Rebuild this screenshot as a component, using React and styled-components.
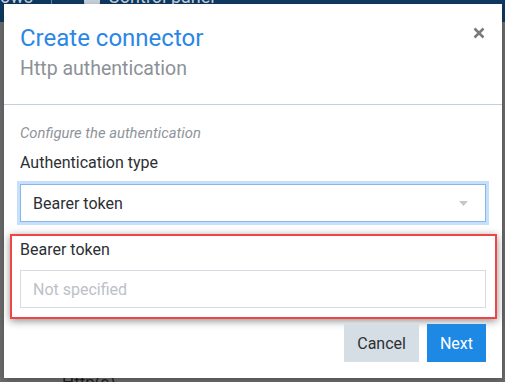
import React from 'react';
import styled, { createGlobalStyle } from 'styled-components';

const GlobalStyle = createGlobalStyle`
  *,
  *:before,
  *:after {
    margin: 0;
    padding: 0;
    box-sizing: border-box;
  }

  body {
    margin: 0;
    font-family: Roboto, 'Noto Sans', sans-serif;
    overflow: hidden;
  }
`;

const Page = styled.div`
  position: relative;
  width: 505px;
  height: 382px;
  background: #6c6c6c;
  overflow: hidden;
`;

const NavBar = styled.div`
  display: flex;
  align-items: flex-end;
  height: 22px;
  background: #0f3a63;
  color: #c9d3de;
  font-size: 18px;
  line-height: 1;
  padding: 0 0 16px 0;
`;

const NavItem = styled.span`
  display: flex;
  align-items: center;
  gap: 8px;
  margin-left: ${props => props.offset || 0}px;
`;

const NavSep = styled.span`
  width: 1px;
  height: 22px;
  background: #6d88a6;
  margin-left: 18px;
`;

const BehindText = styled.div`
  position: absolute;
  left: 62px;
  top: 372px;
  font-size: 17px;
  color: #1e1e1e;
`;

const Modal = styled.div`
  position: absolute;
  top: 4px;
  left: 4px;
  width: 498px;
  height: 374px;
  background: #fff;
  box-shadow: 0 2px 8px rgba(0, 0, 0, 0.25);
  display: flex;
  flex-direction: column;
`;

const Header = styled.div`
  position: relative;
  height: 101px;
  padding: 20px 16px 0;
  border-bottom: 1px solid #c3cfdb;
`;

const Title = styled.h1`
  font-size: 24px;
  font-weight: 400;
  line-height: 28px;
  color: #2b87e4;
`;

const Subtitle = styled.h2`
  font-size: 19.5px;
  font-weight: 400;
  line-height: 23px;
  margin-top: 5px;
  color: #8c9198;
`;

const CloseButton = styled.button`
  position: absolute;
  top: 23px;
  right: 17px;
  width: 12px;
  height: 12px;
  border: none;
  background: none;
  display: flex;
  cursor: pointer;
`;

const Body = styled.div`
  padding: 19px 16px 0;
  display: flex;
  flex-direction: column;
`;

const Hint = styled.p`
  font-size: 14.8px;
  font-style: italic;
  line-height: 18px;
  color: #8f949a;
`;

const Label = styled.label`
  display: block;
  font-size: 16px;
  line-height: 19px;
  color: #2c2f33;
  margin-top: ${props => props.gap || 0}px;
`;

const SelectBox = styled.div`
  display: flex;
  align-items: center;
  justify-content: space-between;
  height: 38px;
  margin-top: 12px;
  padding: 0 17px 0 12px;
  border: 1px solid #86b7ea;
  box-shadow: 0 0 0 3px #c6e0fb;
  font-size: 16px;
  color: #2c2f33;
`;

const Highlight = styled.div`
  margin: 12px -11px 0 -10px;
  padding: 4px 9px 9px 8px;
  border: 2px solid #ee4545;
  box-shadow: 0 2px 8px rgba(0, 0, 0, 0.45);
`;

const Input = styled.input`
  display: block;
  width: 100%;
  height: 38px;
  margin-top: 11px;
  padding: 0 12px;
  border: 1px solid #d6dce3;
  font-family: inherit;
  font-size: 16px;
  color: #2c2f33;
  outline: none;

  &::placeholder {
    color: #bcc1c7;
  }
`;

const Footer = styled.div`
  display: flex;
  justify-content: flex-end;
  gap: 8px;
  padding: 5px 16px 0;
`;

const Button = styled.button`
  height: 38px;
  padding: 0 13px;
  border: none;
  font-family: inherit;
  font-size: 16px;
  background: ${props => (props.primary ? '#1e88e5' : '#d5dde5')};
  color: ${props => (props.primary ? '#fff' : '#2c2f33')};
  cursor: pointer;
`;

const App = () => (
  <React.Fragment>
    <GlobalStyle />
    <Page>
      <NavBar>
        <NavItem>ows</NavItem>
        <NavSep />
        <NavItem offset={32}>
          <svg width="16" height="14" viewBox="0 0 16 14">
            <rect x="0" y="0" width="16" height="14" rx="1" fill="#c9d3de" />
          </svg>
          Control panel
        </NavItem>
      </NavBar>
      <BehindText>Http(s)</BehindText>
      <Modal>
        <Header>
          <Title>Create connector</Title>
          <Subtitle>Http authentication</Subtitle>
          <CloseButton aria-label="Close">
            <svg width="12" height="12" viewBox="0 0 12 12">
              <path d="M1.5 1.5 L10.5 10.5 M10.5 1.5 L1.5 10.5" stroke="#7b7b7b" strokeWidth="2.6" />
            </svg>
          </CloseButton>
        </Header>
        <Body>
          <Hint>Configure the authentication</Hint>
          <Label gap={11}>Authentication type</Label>
          <SelectBox>
            <span>Bearer token</span>
            <svg width="9" height="5" viewBox="0 0 9 5">
              <path d="M0 0 L9 0 L4.5 5 Z" fill="#c2c8cf" />
            </svg>
          </SelectBox>
          <Highlight>
            <Label>Bearer token</Label>
            <Input placeholder="Not specified" />
          </Highlight>
        </Body>
        <Footer>
          <Button>Cancel</Button>
          <Button primary>Next</Button>
        </Footer>
      </Modal>
    </Page>
  </React.Fragment>
);

export default App;
